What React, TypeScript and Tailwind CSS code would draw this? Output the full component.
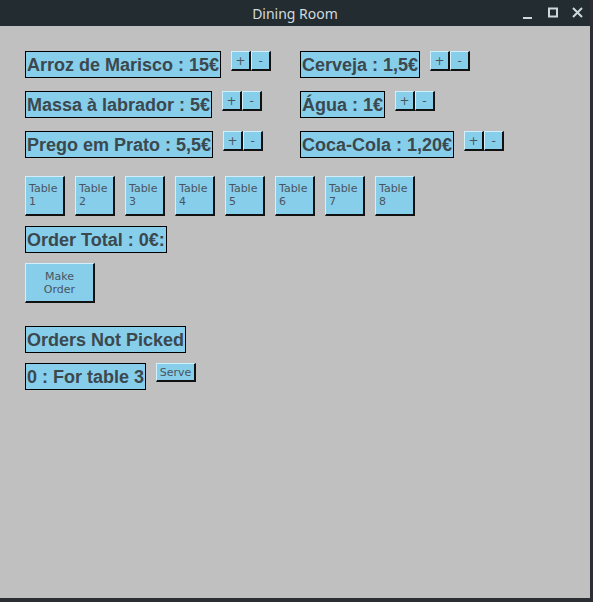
import React from "react";

const labelCls =
  "h-[27px] border border-black bg-[#87ceeb] flex items-center px-[1px] text-[18px] font-bold text-[#3b484d] leading-none whitespace-nowrap";
const labelFont = { fontFamily: '"Liberation Sans", Arial, sans-serif' };
const tkFont = { fontFamily: '"DejaVu Sans", sans-serif' };

const raised =
  "bg-[#87ceeb] border-t border-l border-t-[#d2f0fb] border-l-[#d2f0fb] border-r-2 border-b-2 border-r-[#111] border-b-[#111] text-[#4a5560]";

function PM({ focus }: { focus?: boolean }) {
  return (
    <div className="flex ml-[10px]" style={tkFont}>
      <div
        className={`w-[20px] h-[20px] ${raised} flex items-center justify-center text-[12px] leading-none ${
          focus ? "border-l-[#222] border-t-[#222]" : ""
        }`}
      >
        +
      </div>
      <div
        className={`w-[20px] h-[20px] ${raised} flex items-center justify-center text-[12px] leading-none`}
      >
        -
      </div>
    </div>
  );
}

function Item({ text, focus }: { text: string; focus?: boolean }) {
  return (
    <div className="flex items-start h-[27px]">
      <div className={labelCls} style={labelFont}>
        {text}
      </div>
      <PM focus={focus} />
    </div>
  );
}

export default function App() {
  return (
    <div className="w-[593px] h-[602px] bg-[#2b2f33] overflow-hidden">
      <div className="w-[590px] h-[598px] bg-[#c0c0c0] flex flex-col">
        <div className="h-[26px] bg-[#222c31] relative flex items-center justify-center">
          <span
            className="text-[14px] text-[#d3dadd]"
            style={{ fontFamily: '"Noto Sans", "Open Sans", sans-serif' }}
          >
            Dining Room
          </span>
          <svg className="absolute left-[520px] top-[6px]" width="64" height="14" viewBox="0 0 64 14">
            <rect x="3" y="11" width="9" height="2" fill="#cfd8dc" />
            <rect x="29" y="2.5" width="8" height="8" fill="none" stroke="#cfd8dc" strokeWidth="2" />
            <path d="M53 2 L62 11 M62 2 L53 11" stroke="#cfd8dc" strokeWidth="2" />
          </svg>
        </div>
        <div className="pl-[25px] pt-[25px] flex flex-col">
          <div className="flex">
            <div className="w-[275px] flex flex-col gap-[13px]">
              <Item text="Arroz de Marisco : 15€" focus />
              <Item text="Massa à labrador : 5€" />
              <Item text="Prego em Prato : 5,5€" />
            </div>
            <div className="flex flex-col gap-[13px]">
              <Item text="Cerveja : 1,5€" />
              <Item text="Água : 1€" />
              <Item text="Coca-Cola : 1,20€" />
            </div>
          </div>
          <div className="flex gap-[10px] mt-[18px]">
            {[1, 2, 3, 4, 5, 6, 7, 8].map((n) => (
              <div
                key={n}
                className={`w-[40px] h-[40px] ${raised} text-[11px] leading-[13px] pl-[3px] pt-[5px]`}
                style={tkFont}
              >
                Table
                <br />
                {n}
              </div>
            ))}
          </div>
          <div className="flex mt-[10px]">
            <div className={labelCls} style={labelFont}>
              Order Total : 0€:
            </div>
          </div>
          <div className="flex mt-[10px]">
            <div
              className={`w-[70px] h-[40px] ${raised} text-[11px] leading-[13px] flex items-center justify-center text-center`}
              style={tkFont}
            >
              Make
              <br />
              Order
            </div>
          </div>
          <div className="flex mt-[23px]">
            <div className={labelCls} style={labelFont}>
              Orders Not Picked
            </div>
          </div>
          <div className="flex items-start mt-[10px]">
            <div className={labelCls} style={labelFont}>
              0 : For table 3
            </div>
            <div
              className={`ml-[10px] w-[40px] h-[19px] ${raised} text-[11px] leading-none flex items-center justify-center`}
              style={tkFont}
            >
              Serve
            </div>
          </div>
        </div>
      </div>
    </div>
  );
}
